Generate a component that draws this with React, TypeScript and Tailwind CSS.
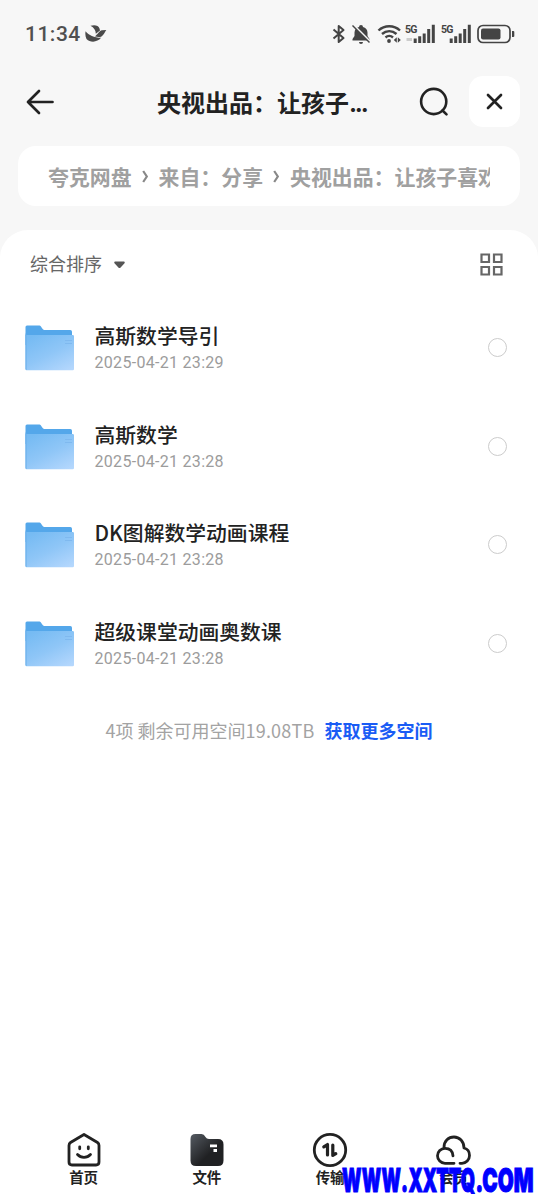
import React from 'react';

const files = [
  { name: '高斯数学导引', date: '2025-04-21 23:29' },
  { name: '高斯数学', date: '2025-04-21 23:28' },
  { name: 'DK图解数学动画课程', date: '2025-04-21 23:28' },
  { name: '超级课堂动画奥数课', date: '2025-04-21 23:28' },
];

const Signal: React.FC<{ faded?: boolean }> = ({ faded }) => (
  <svg width="32" height="20" viewBox="0 0 32 20" fill="#444">
    <text x="0" y="9" fontSize="10.5" fontWeight="700" fontFamily="Roboto" textLength="12.5">5G</text>
    {faded && <path d="M1.500 14h5.500v3H1.500z" fill="#ccc" />}
    <path d="M8.700 14.500h3v4.500h-3zM13.200 12.300h3V19h-3zM17.700 9.500h3V19h-3zM22.200 5h3v14h-3zM26.800 .7h3V19h-3z" />
  </svg>
);

const StatusBar = () => (
  <div className="flex h-[68px] items-center pl-[25px] pr-[23px]">
    <span className="mt-[2px] w-[60px] whitespace-nowrap font-['Roboto'] text-[21px] font-medium tracking-[0.5px] text-[#505050]">11:34</span>
    <svg className="mt-[-1px]" width="22" height="17" viewBox="0 0 22 17" fill="#4a4a4a">
      <path d="M5.500 .8C9-.3 13.500 0 14.500 3.500l.5 2-4.200 3.200C10.800 5.500 9 2.500 5.500 .8z" />
      <path d="M9.800 11.200C12.500 10 14 5.500 17 5.200l4.300-.2C19.500 7 19 10 16.500 11.400c-1.800.8-4.700.6-6.700-.2z" />
      <path d="M.6 6.200c3.200 4 8.400 6.300 15.500 6.600C12.500 17.300 5.500 18 1.500 14 .4 11.600 0 8.800.6 6.200z" />
    </svg>
    <div className="ml-auto flex items-center">
      <svg width="14" height="20" viewBox="0 0 14 20" fill="none" stroke="#444" strokeWidth="2">
        <path d="M1.500 5.500l10 8.500-4.800 4V2l4.800 4-10 8.500" strokeLinejoin="round" />
      </svg>
      <svg className="ml-[5px]" width="20" height="21" viewBox="0 0 20 21">
        <path d="M1.500 16.500V15l2-3V8.500A6 6 0 0 1 8 3a2 2 0 0 1 4 0 6 6 0 0 1 4.500 5.500V12l2 3v1.500zM8 18h4a2 2 0 0 1-4 0z" fill="#444" />
        <path d="M2.500 1l17 17" stroke="#f7f7f7" strokeWidth="2" />
        <path d="M1.500 1.500l17 17" stroke="#444" strokeWidth="1.500" />
      </svg>
      <svg className="ml-[6px]" width="25" height="20" viewBox="0 0 25 20" fill="none" stroke="#444" strokeWidth="2.400">
        <path d="M1.500 6.500c6-5.700 15.500-5.700 21.500 0M5 10c4.300-3.900 10.200-3.900 14.500 0M8.500 13.500c2.200-2 5.300-2 7.500 0" />
        <circle cx="12" cy="17" r="1.900" fill="#444" stroke="none" />
        <path d="M16.800 16l3-2.800v5.600zM23.800 16l-3 2.800v-5.600z" fill="#444" stroke="none" />
      </svg>
      <div className="ml-[3px] flex gap-[4px]">
        <Signal faded />
        <Signal />
      </div>
      <svg className="ml-[4px]" width="38" height="20" viewBox="0 0 38 20">
        <rect x="1" y="1.500" width="32" height="17" rx="5" fill="none" stroke="#444" strokeWidth="1.700" />
        <rect x="4" y="4.500" width="19.500" height="11" rx="2" fill="#444" />
        <path d="M35 7h1.300a1 1 0 0 1 1 1v4a1 1 0 0 1-1 1H35z" fill="#444" />
      </svg>
    </div>
  </div>
);

const Header = () => (
  <header className="flex h-[68px] items-center pl-[26px] pr-[18px]">
    <svg className="mt-[-1px]" width="29" height="26" viewBox="0 0 29 26" fill="none" stroke="#222" strokeWidth="2.700" strokeLinecap="round" strokeLinejoin="round">
      <path d="M13 2L2 13l11 11M2 13h24.500" />
    </svg>
    <h1 className="ml-[102px] mt-[1px] whitespace-nowrap text-[24px] font-bold leading-9 text-[#222]">
      央视出品：让孩子<span className="font-['Inter'] tracking-[-2.2px]">...</span>
    </h1>
    <svg className="ml-auto" width="30" height="30" viewBox="0 0 30 30" fill="none" stroke="#222" strokeWidth="2.600" strokeLinecap="round">
      <circle cx="14.700" cy="14.500" r="12.600" />
      <path d="M23.500 23.500l4 3.900" />
    </svg>
    <button className="ml-[20px] mt-[-2px] flex size-[51px] items-center justify-center rounded-[14px] bg-white">
      <svg width="17" height="17" viewBox="0 0 17 17" stroke="#222" strokeWidth="2.700" strokeLinecap="round">
        <path d="M2 2l13 13M15 2L2 15" />
      </svg>
    </button>
  </header>
);

const Chevron = () => (
  <svg className="mx-[10px] shrink-0" width="7" height="14" viewBox="0 0 7 14" fill="none" stroke="#888" strokeWidth="2.200">
    <path d="M1.200 1L4.800 6.500 1.200 12" />
  </svg>
);

const Breadcrumb = () => (
  <nav className="mx-[18px] mt-[10px] h-[60px] rounded-[18px] bg-white px-[30px]">
    <div className="flex h-[61px] items-center overflow-hidden whitespace-nowrap text-[20.9px] font-bold text-[#a0a0a0]">
      <span className="shrink-0">夸克网盘</span>
      <Chevron />
      <span className="shrink-0">来自：分享</span>
      <Chevron />
      <span className="shrink-0">央视出品：让孩子喜欢</span>
    </div>
  </nav>
);

const Folder = () => (
  <svg width="50" height="46" viewBox="0 0 50 46">
    <defs>
      <linearGradient id="front" x1="0.200" y1="0" x2="0.900" y2="1">
        <stop offset="0" stopColor="#76bbf3" />
        <stop offset="0.500" stopColor="#8fc6f7" />
        <stop offset="1" stopColor="#b4d7fd" />
      </linearGradient>
    </defs>
    <path d="M.5 2A1.500 1.500 0 0 1 2 .5h12.500c2 0 2.500 4.500 5 4.500h25.800a1.700 1.700 0 0 1 1.700 1.700V20H.5z" fill="#54a7ea" />
    <path d="M.5 10h47.200a1.300 1.300 0 0 1 1.300 1.300V44a1.300 1.300 0 0 1-1.300 1.300H2A1.500 1.500 0 0 1 .5 44z" fill="url(#front)" />
    <path d="M.5 8v36A1.500 1.500 0 0 0 1.500 45.300V10z" fill="#68aee9" />
    <path d="M40 15.500h7M40 18.500h7" stroke="#7fb9ef" strokeWidth="1" />
  </svg>
);

const NavItem: React.FC<{ label: string; children: React.ReactNode }> = ({ label, children }) => (
  <div className="flex flex-1 flex-col items-center">
    <svg width="36" height="36" viewBox="0 0 36 36" overflow="visible" fill="none" stroke="#222" strokeWidth="2.800" strokeLinecap="round" strokeLinejoin="round">
      {children}
    </svg>
    <span className="mt-[-1px] text-[14.5px] font-bold leading-[20px] text-[#222]">{label}</span>
  </div>
);

const App: React.FC = () => {
  return (
    <div className="relative flex h-[1200px] w-[538px] flex-col overflow-hidden bg-[#f7f7f7] font-['Noto_Sans_CJK_SC',sans-serif]">
      <StatusBar />
      <Header />
      <Breadcrumb />

      <main className="mt-[24px] flex flex-1 flex-col rounded-t-[28px] bg-white">
        <div className="flex h-[69px] items-center pl-[30px] pr-[35px] text-[18px] text-[#666]">
          <span className="mt-[-3px]">综合排序</span>
          <svg className="ml-[12px]" width="11" height="8" viewBox="0 0 11 8" fill="#555">
            <path d="M1.500 .5h8c1.300 0 1.700 1.200.8 2L6.600 6.500c-.7.800-1.500.8-2.200 0L.7 2.500C-.2 1.700.2.500 1.500.5z" />
          </svg>
          <svg className="ml-auto" width="23" height="23" viewBox="0 0 23 23" fill="none" stroke="#666" strokeWidth="2.200">
            <path d="M1.500 1.500h7.500v7.500H1.500zM14 1.500h7.500v7.500H14zM1.500 14h7.500v7.500H1.500zM14 14h7.500v7.500H14z" />
          </svg>
        </div>

        <ul>
          {files.map((file) => (
            <li key={file.name} className="flex h-[98.5px] items-center pl-[24.5px] pr-[31px]">
              <Folder />
              <div className="ml-[20px] flex flex-col">
                <span className="text-[20.8px] font-medium leading-[28px] text-[#222]">{file.name}</span>
                <span className="mt-[2px] font-['Roboto'] text-[16px] leading-[24px] tracking-[0.3px] text-[#9c9c9c]">{file.date}</span>
              </div>
              <span className="mt-[-1px] ml-auto size-[19px] rounded-full border-[1.5px] border-[#ccc]" />
            </li>
          ))}
        </ul>

        <div className="mt-[24px] flex justify-center whitespace-nowrap text-[18px] leading-[27px] text-[#a3a3a3]">
          <span>4项 剩余可用空间<span className="tracking-[0.2px]">19.08TB</span></span>
          <a className="ml-[10px] font-bold text-[#1a5cf5]">获取更多空间</a>
        </div>

        <div className="mt-auto flex h-[68px] pl-[22px] pr-[23px]">
          <NavItem label="首页">
            <path d="M18 2.500L4.500 10.500Q3 11.500 3 13.500V30q0 3 3 3h24q3 0 3-3V13.500q0-2-1.500-3z" />
            <path d="M13.700 14.800v2M22.300 14.800v2M11.500 22.500c3.600 3.700 9.400 3.700 13 0" />
          </NavItem>
          <NavItem label="文件">
            <defs>
              <linearGradient id="tab" x1="0" y1="0" x2="0.600" y2="0.600">
                <stop offset="0" stopColor="#555b62" />
                <stop offset="1" stopColor="#202123" />
              </linearGradient>
            </defs>
            <path d="M1.500 7q0-5 5-5h6q2.500 0 4 3 1 2 3.500 2h9q5.500 0 5.500 5.500v16q0 5.500-5.500 5.500H7q-5.500 0-5.500-5.500z" fill="url(#tab)" stroke="none" />
            <path d="M21 13.800h7M24.500 18.500h3.500" stroke="#fff" strokeWidth="2.800" strokeLinecap="butt" />
          </NavItem>
          <NavItem label="传输">
            <circle cx="18" cy="18" r="15.700" />
            <path d="M11.800 14.800l3.700-2.300v10.500M20.800 13v10.500l3-1.800" strokeWidth="3.200" />
          </NavItem>
          <NavItem label="会员">
            <path d="M19 31.300H10a7.400 7.400 0 0 1 0-15q7.500 0 8 7.500" />
            <path d="M9 15.500C9 9 13.500 5 19 5s10 4.500 10 11c4 1 5.500 4 5.500 7.500 0 4.500-3.500 7.800-7.500 7.800h-2" />
          </NavItem>
        </div>
      </main>

      {/* site stamp over the tab bar */}
      <svg
        className="absolute bottom-0 left-[341px] font-['Inter'] font-black"
        width="194"
        height="40"
        viewBox="0 0 194 40"
        overflow="visible"
        fontSize="32.5"
        fill="#0000ff"
        stroke="#0000ff"
        strokeWidth="1.1"
      >
        <text y="32">
          <tspan x="1" textLength="59" lengthAdjust="spacingAndGlyphs">WWW</tspan>
          <tspan x="60" textLength="7" lengthAdjust="spacingAndGlyphs">.</tspan>
          <tspan x="67.500" textLength="66.500" lengthAdjust="spacingAndGlyphs">XXTTQ</tspan>
          <tspan x="134.500" textLength="58" lengthAdjust="spacingAndGlyphs">.COM</tspan>
        </text>
      </svg>
    </div>
  );
};

export default App;
